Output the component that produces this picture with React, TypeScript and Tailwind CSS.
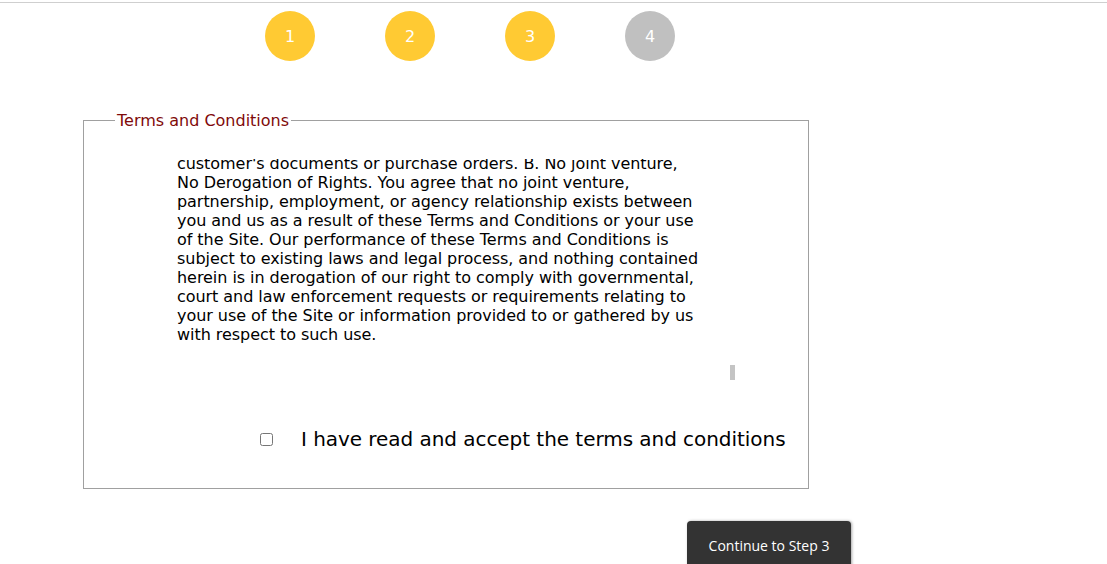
import React from 'react'

const steps = [
  { n: 1, done: true },
  { n: 2, done: true },
  { n: 3, done: true },
  { n: 4, done: false },
]

const terms =
  "customer's documents or purchase orders. B. No joint venture, No Derogation of Rights. You agree that no joint venture, partnership, employment, or agency relationship exists between you and us as a result of these Terms and Conditions or your use of the Site. Our performance of these Terms and Conditions is subject to existing laws and legal process, and nothing contained herein is in derogation of our right to comply with governmental, court and law enforcement requests or requirements relating to your use of the Site or information provided to or gathered by us with respect to such use."

export default function App() {
  return (
    <div className="h-[564px] overflow-hidden bg-white font-['DejaVu_Sans',sans-serif] text-black">
      <div className="h-[3px] border-b border-[#cfcfcf]" />

      {/* step indicators */}
      <div className="mt-[8px] ml-[265px] flex gap-[70px]">
        {steps.map((s) => (
          <div
            key={s.n}
            className={
              s.done
                ? 'w-[50px] h-[50px] rounded-full bg-[#ffca33] flex items-center justify-center pt-[1px] text-white text-[16px]'
                : 'w-[50px] h-[50px] rounded-full bg-[#c0c0c0] flex items-center justify-center pt-[1px] text-white text-[16px]'
            }
          >
            {s.n}
          </div>
        ))}
      </div>

      <fieldset className="mt-[50px] ml-[83px] w-[726px] border border-[#a0a0a0] pl-[31px] pb-[37px]">
        <legend className="px-[2px] text-[16px] leading-[19px] text-[#7f0a0a]">Terms and Conditions</legend>

        {/* scrolled text box, top lines clipped */}
        <div className="relative mt-[29px] ml-[62px] w-[560px] h-[222px] overflow-hidden">
          <p className="mt-[-5px] w-[524px] text-[16px] leading-[19px] tracking-[-0.05px]">{terms}</p>
          <div className="absolute left-[553px] top-[206px] w-[5px] h-[15px] bg-[#c4c4c4]" />
        </div>

        <div className="mt-[46px] h-[24px] pl-[145px] flex items-center">
          <input type="checkbox" className="w-[13px] h-[13px] m-0" />
          <label className="ml-[28px] text-[20px] leading-[24px] tracking-[-0.05px]">
            I have read and accept the terms and conditions
          </label>
        </div>
      </fieldset>

      <div className="mt-[32px] ml-[687px]">
        <button className="w-[164px] h-[48px] flex items-start justify-center rounded-t-[4px] bg-[#333333] pt-[15px] text-white text-[14px] leading-[20px] font-['Open_Sans',sans-serif] shadow-[1px_0_3px_rgba(0,0,0,0.35)]">
          Continue to Step 3
        </button>
      </div>
    </div>
  )
}
